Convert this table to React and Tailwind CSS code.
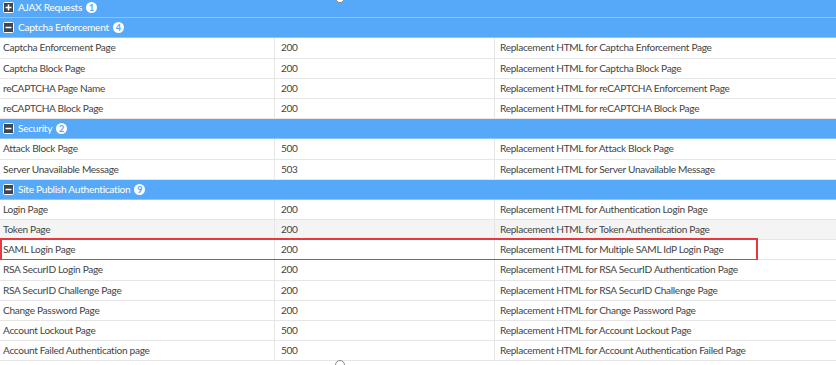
// ==============================
// Error Pages Table
// ==============================

const GROUPS = [
  {
    name: "AJAX Requests",
    count: 1,
    open: false,
    rows: [],
  },
  {
    name: "Captcha Enforcement",
    count: 4,
    open: true,
    rows: [
      ["Captcha Enforcement Page", "200", "Replacement HTML for Captcha Enforcement Page"],
      ["Captcha Block Page", "200", "Replacement HTML for Captcha Block Page"],
      ["reCAPTCHA Page Name", "200", "Replacement HTML for reCAPTCHA Enforcement Page"],
      ["reCAPTCHA Block Page", "200", "Replacement HTML for reCAPTCHA Block Page"],
    ],
  },
  {
    name: "Security",
    count: 2,
    open: true,
    rows: [
      ["Attack Block Page", "500", "Replacement HTML for Attack Block Page"],
      ["Server Unavailable Message", "503", "Replacement HTML for Server Unavailable Message"],
    ],
  },
  {
    name: "Site Publish Authentication",
    count: 9,
    open: true,
    rows: [
      ["Login Page", "200", "Replacement HTML for Authentication Login Page"],
      ["Token Page", "200", "Replacement HTML for Token Authentication Page", "hover"],
      ["SAML Login Page", "200", "Replacement HTML for Multiple SAML IdP Login Page", "mark"],
      ["RSA SecurID Login Page", "200", "Replacement HTML for RSA SecurID Authentication Page"],
      ["RSA SecurID Challenge Page", "200", "Replacement HTML for RSA SecurID Challenge Page"],
      ["Change Password Page", "200", "Replacement HTML for Change Password Page"],
      ["Account Lockout Page", "500", "Replacement HTML for Account Lockout Page"],
      ["Account Failed Authentication page", "500", "Replacement HTML for Account Authentication Failed Page"],
    ],
  },
];

// ------------------------------
// Expand / collapse box icon
// ------------------------------
function ToggleIcon({ open }) {
  return (
    <svg width="11" height="11" viewBox="0 0 11 11" className="shrink-0">
      <rect x="0.5" y="0.5" width="10" height="10" rx="1" fill="#3f4650" stroke="#fff" />
      <rect x="2.5" y="4.75" width="6" height="1.5" fill="#fff" />
      {!open && <rect x="4.75" y="2.5" width="1.5" height="6" fill="#fff" />}
    </svg>
  );
}

function GroupHeader({ group, first }) {
  return (
    <div
      className={
        "flex items-center gap-[4px] h-[20.2px] pl-[3px] bg-[#56a9f8] text-white text-[10.2px] tracking-[-0.3px] border-b border-[#8cc5fb] " +
        (first ? "-mt-[2px]" : "")
      }
    >
      <ToggleIcon open={group.open} />
      <span>{group.name}</span>
      <span className="flex items-center justify-center w-[11px] h-[11px] rounded-full bg-white text-[#56a9f8] text-[9px] font-bold leading-none tracking-normal">
        {group.count}
      </span>
    </div>
  );
}

function Row({ row }) {
  const [name, code, desc, flag] = row;
  return (
    <div
      className={
        "relative grid grid-cols-[275px_220px_1fr] h-[20.2px] items-stretch text-[10.1px] tracking-[-0.3px] text-[#444] border-b border-[#e6e6e6] " +
        (flag === "hover" ? "bg-[#f4f4f4]" : "bg-white")
      }
    >
      <div className="flex items-center pl-[3px] border-r border-[#e6e6e6]">{name}</div>
      <div className="flex items-center pl-[6px] border-r border-[#e6e6e6]">{code}</div>
      <div className="flex items-center pl-[5px]">{desc}</div>
      {flag === "mark" && (
        <div className="absolute left-0 top-[-2px] w-[758px] h-[23px] border-2 border-[#e8383d] pointer-events-none" />
      )}
    </div>
  );
}

export default function App() {
  return (
    <div
      className="relative w-[836px] h-[365px] overflow-hidden bg-white"
      style={{ fontFamily: "Lato, 'Open Sans', sans-serif" }}
    >
      {/* resize handle top */}
      <div className="absolute left-[335px] top-[-7px] w-[10px] h-[10px] rounded-full border border-[#888] bg-white z-10" />

      {GROUPS.map((g, i) => (
        <div key={g.name}>
          <GroupHeader group={g} first={i === 0} />
          {g.open && g.rows.map((r) => <Row key={r[0]} row={r} />)}
        </div>
      ))}

      {/* resize handle bottom */}
      <div className="absolute left-[335px] top-[360px] w-[10px] h-[10px] rounded-full border border-[#888] bg-white z-10" />
    </div>
  );
}
